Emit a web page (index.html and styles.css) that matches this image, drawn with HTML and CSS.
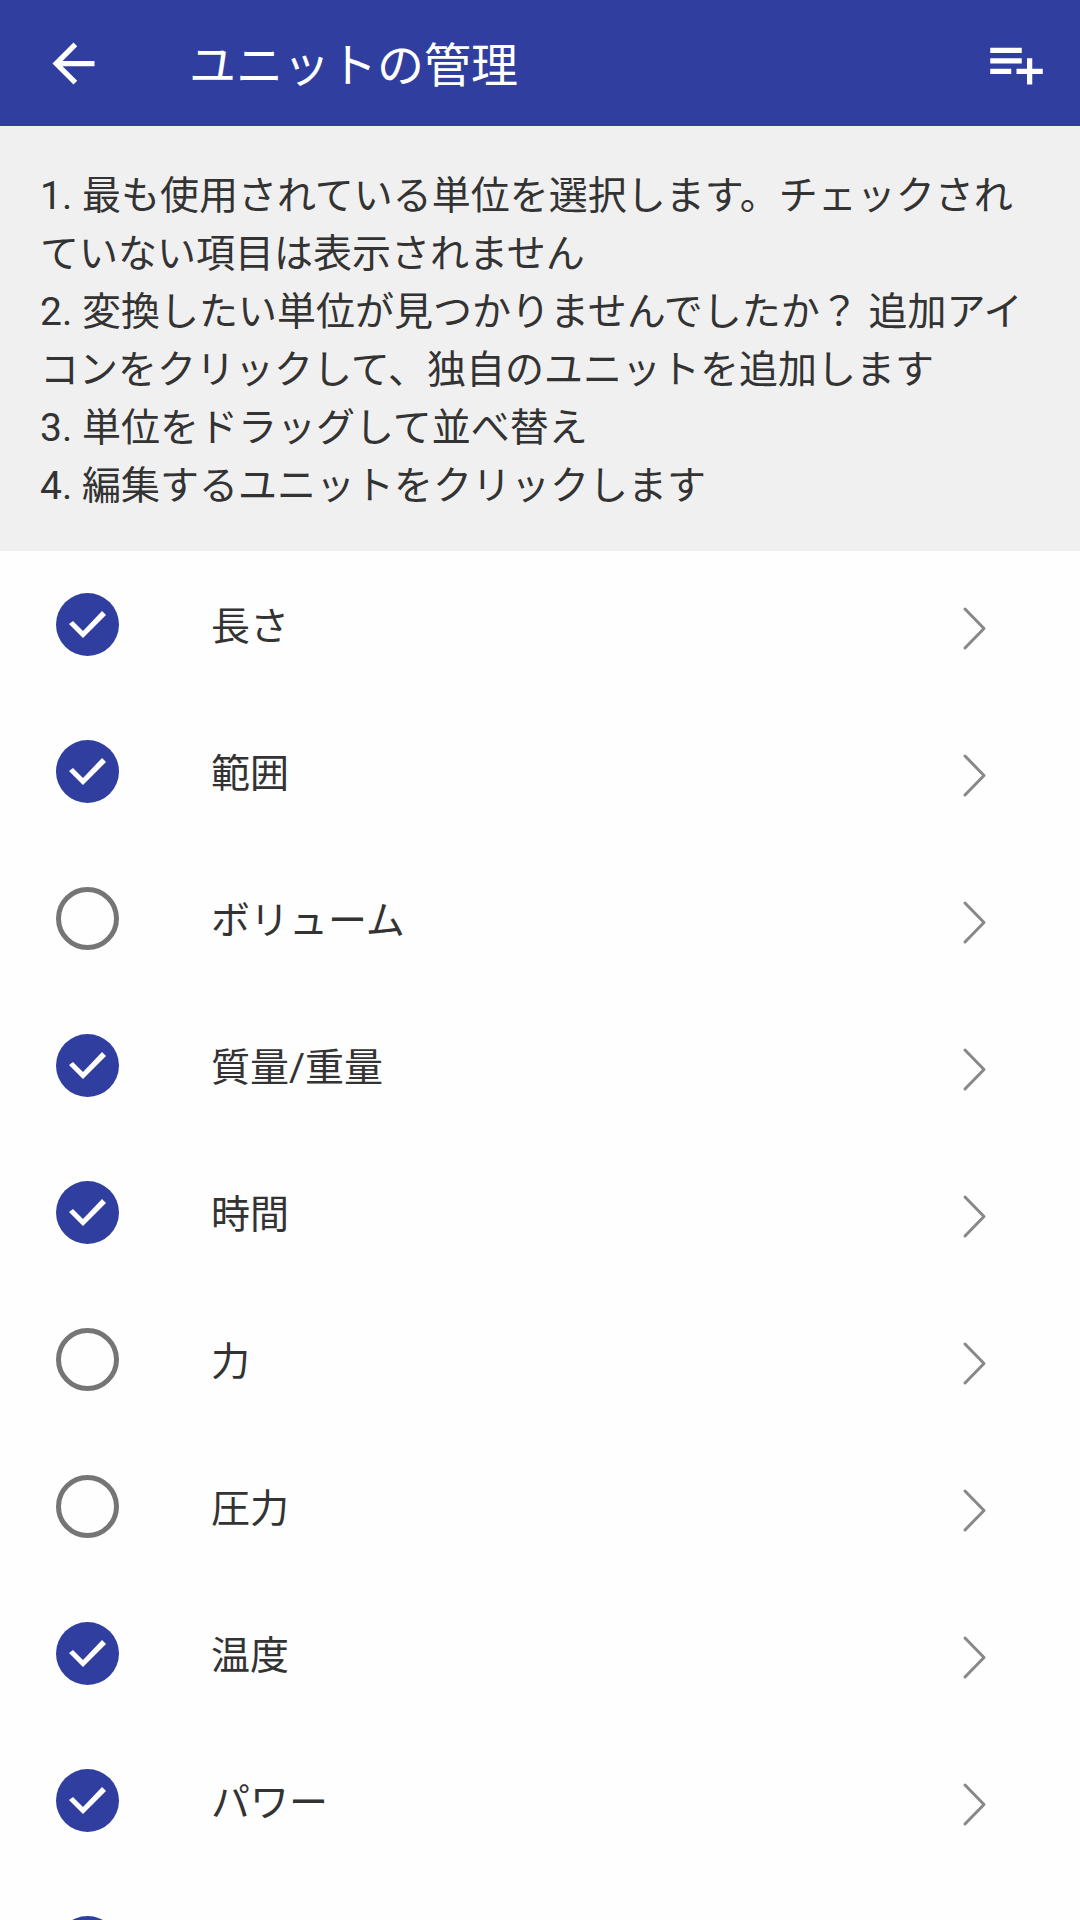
FILE: index.html
```html
<!DOCTYPE html>
<html lang="ja">
<head>
<meta charset="utf-8">
<meta name="viewport" content="width=device-width, initial-scale=1">
<title>ユニットの管理</title>
<link rel="stylesheet" href="styles.css">
</head>
<body>
<svg class="defs" aria-hidden="true">
  <symbol id="chevron" viewBox="0 0 48 60"><path d="M14 14L33 33.500L14 53" fill="none" stroke="currentColor" stroke-width="3" stroke-linecap="round" stroke-linejoin="round"/></symbol>
</svg>
<header class="app-bar">
  <button class="icon-button" type="button" aria-label="戻る">
    <svg class="icon" viewBox="0 0 24 24"><path d="M20 11H7.830l5.590-5.590L12 4l-8 8 8 8 1.410-1.410L7.830 13H20v-2z"/></svg>
  </button>
  <h1 class="app-title">ユニットの管理</h1>
  <button class="icon-button" type="button" aria-label="追加">
    <svg class="icon" viewBox="0 0 24 24"><path d="M14 10H2v2h12v-2zm0-4H2v2h12V6zm4 8v-4h-2v4h-4v2h4v4h2v-4h4v-2h-4zM2 16h8v-2H2v2z"/></svg>
  </button>
</header>
<section class="hints">
  <p>1. 最も使用されている単位を選択します。チェックされていない項目は表示されません</p>
  <p>2. 変換したい単位が見つかりませんでしたか？ 追加アイコンをクリックして、独自のユニットを追加します</p>
  <p>3. 単位をドラッグして並べ替え</p>
  <p>4. 編集するユニットをクリックします</p>
</section>
<ul class="units">
  <li class="unit"><input class="tick" type="checkbox" id="length" checked><label class="name" for="length">長さ</label><button class="open" type="button" aria-label="長さを編集"><svg class="chevron"><use href="#chevron"/></svg></button></li>
  <li class="unit"><input class="tick" type="checkbox" id="area" checked><label class="name" for="area">範囲</label><button class="open" type="button" aria-label="範囲を編集"><svg class="chevron"><use href="#chevron"/></svg></button></li>
  <li class="unit"><input class="tick" type="checkbox" id="volume"><label class="name" for="volume">ボリューム</label><button class="open" type="button" aria-label="ボリュームを編集"><svg class="chevron"><use href="#chevron"/></svg></button></li>
  <li class="unit"><input class="tick" type="checkbox" id="mass" checked><label class="name" for="mass">質量/重量</label><button class="open" type="button" aria-label="質量/重量を編集"><svg class="chevron"><use href="#chevron"/></svg></button></li>
  <li class="unit"><input class="tick" type="checkbox" id="time" checked><label class="name" for="time">時間</label><button class="open" type="button" aria-label="時間を編集"><svg class="chevron"><use href="#chevron"/></svg></button></li>
  <li class="unit"><input class="tick" type="checkbox" id="force"><label class="name" for="force">力</label><button class="open" type="button" aria-label="力を編集"><svg class="chevron"><use href="#chevron"/></svg></button></li>
  <li class="unit"><input class="tick" type="checkbox" id="pressure"><label class="name" for="pressure">圧力</label><button class="open" type="button" aria-label="圧力を編集"><svg class="chevron"><use href="#chevron"/></svg></button></li>
  <li class="unit"><input class="tick" type="checkbox" id="temperature" checked><label class="name" for="temperature">温度</label><button class="open" type="button" aria-label="温度を編集"><svg class="chevron"><use href="#chevron"/></svg></button></li>
  <li class="unit"><input class="tick" type="checkbox" id="power" checked><label class="name" for="power">パワー</label><button class="open" type="button" aria-label="パワーを編集"><svg class="chevron"><use href="#chevron"/></svg></button></li>
  <li class="unit"><input class="tick" type="checkbox" id="speed" checked><label class="name" for="speed">速度</label><button class="open" type="button" aria-label="速度を編集"><svg class="chevron"><use href="#chevron"/></svg></button></li>
</ul>
</body>
</html>
```
FILE: styles.css
```css
* {
  box-sizing: border-box;
}

body {
  display: flex;
  flex-direction: column;
  height: 100vh;
  margin: 0;
  background: #fefefe;
  color: #333;
  font-family: Roboto, "Noto Sans CJK JP", sans-serif;
  font-size: 39px;
  line-height: 58px;
}

button {
  padding: 0;
  border: 0;
  background: none;
  color: inherit;
  cursor: pointer;
}

.defs {
  display: none;
}

.app-bar {
  display: flex;
  flex: none;
  align-items: center;
  gap: 84px;
  padding: 32px 32px 31px 42px;
  background: #303e9f;
  color: #fff;
}

.icon,
.chevron {
  display: block;
}

.icon {
  width: 63px;
  height: 63px;
  fill: currentColor;
}

.app-title {
  flex: 1;
  margin: 0;
  padding-top: 4px;
  font-size: 47px;
  font-weight: 400;
}

.hints {
  flex: none;
  padding: 41px 40px 36px;
  background: #f0f0f0;
}

.hints p {
  margin: 0;
}

.units {
  flex: 1;
  min-height: 0;
  margin: 0;
  padding: 0;
  overflow-y: auto;
  scrollbar-width: none;
  list-style: none;
}

.unit {
  display: flex;
  align-items: center;
  gap: 92px;
  padding: 42px 81px 42px 56px;
}

.tick {
  flex: none;
  width: 63px;
  height: 63px;
  margin: 0;
  border: 5px solid #757575;
  border-radius: 50%;
  appearance: none;
}

.tick:checked {
  border: 0;
  background: #303e9f;
}

.tick:checked::before {
  content: "";
  display: block;
  height: 100%;
  background: #fff;
  clip-path: polygon(13px 31px, 17px 28px, 27px 38px, 46px 18px, 50px 22px, 27px 45px);
}

.name {
  flex: 1;
  padding-top: 4px;
}

.open {
  color: #888;
}

.chevron {
  width: 48px;
  height: 60px;
}
```
